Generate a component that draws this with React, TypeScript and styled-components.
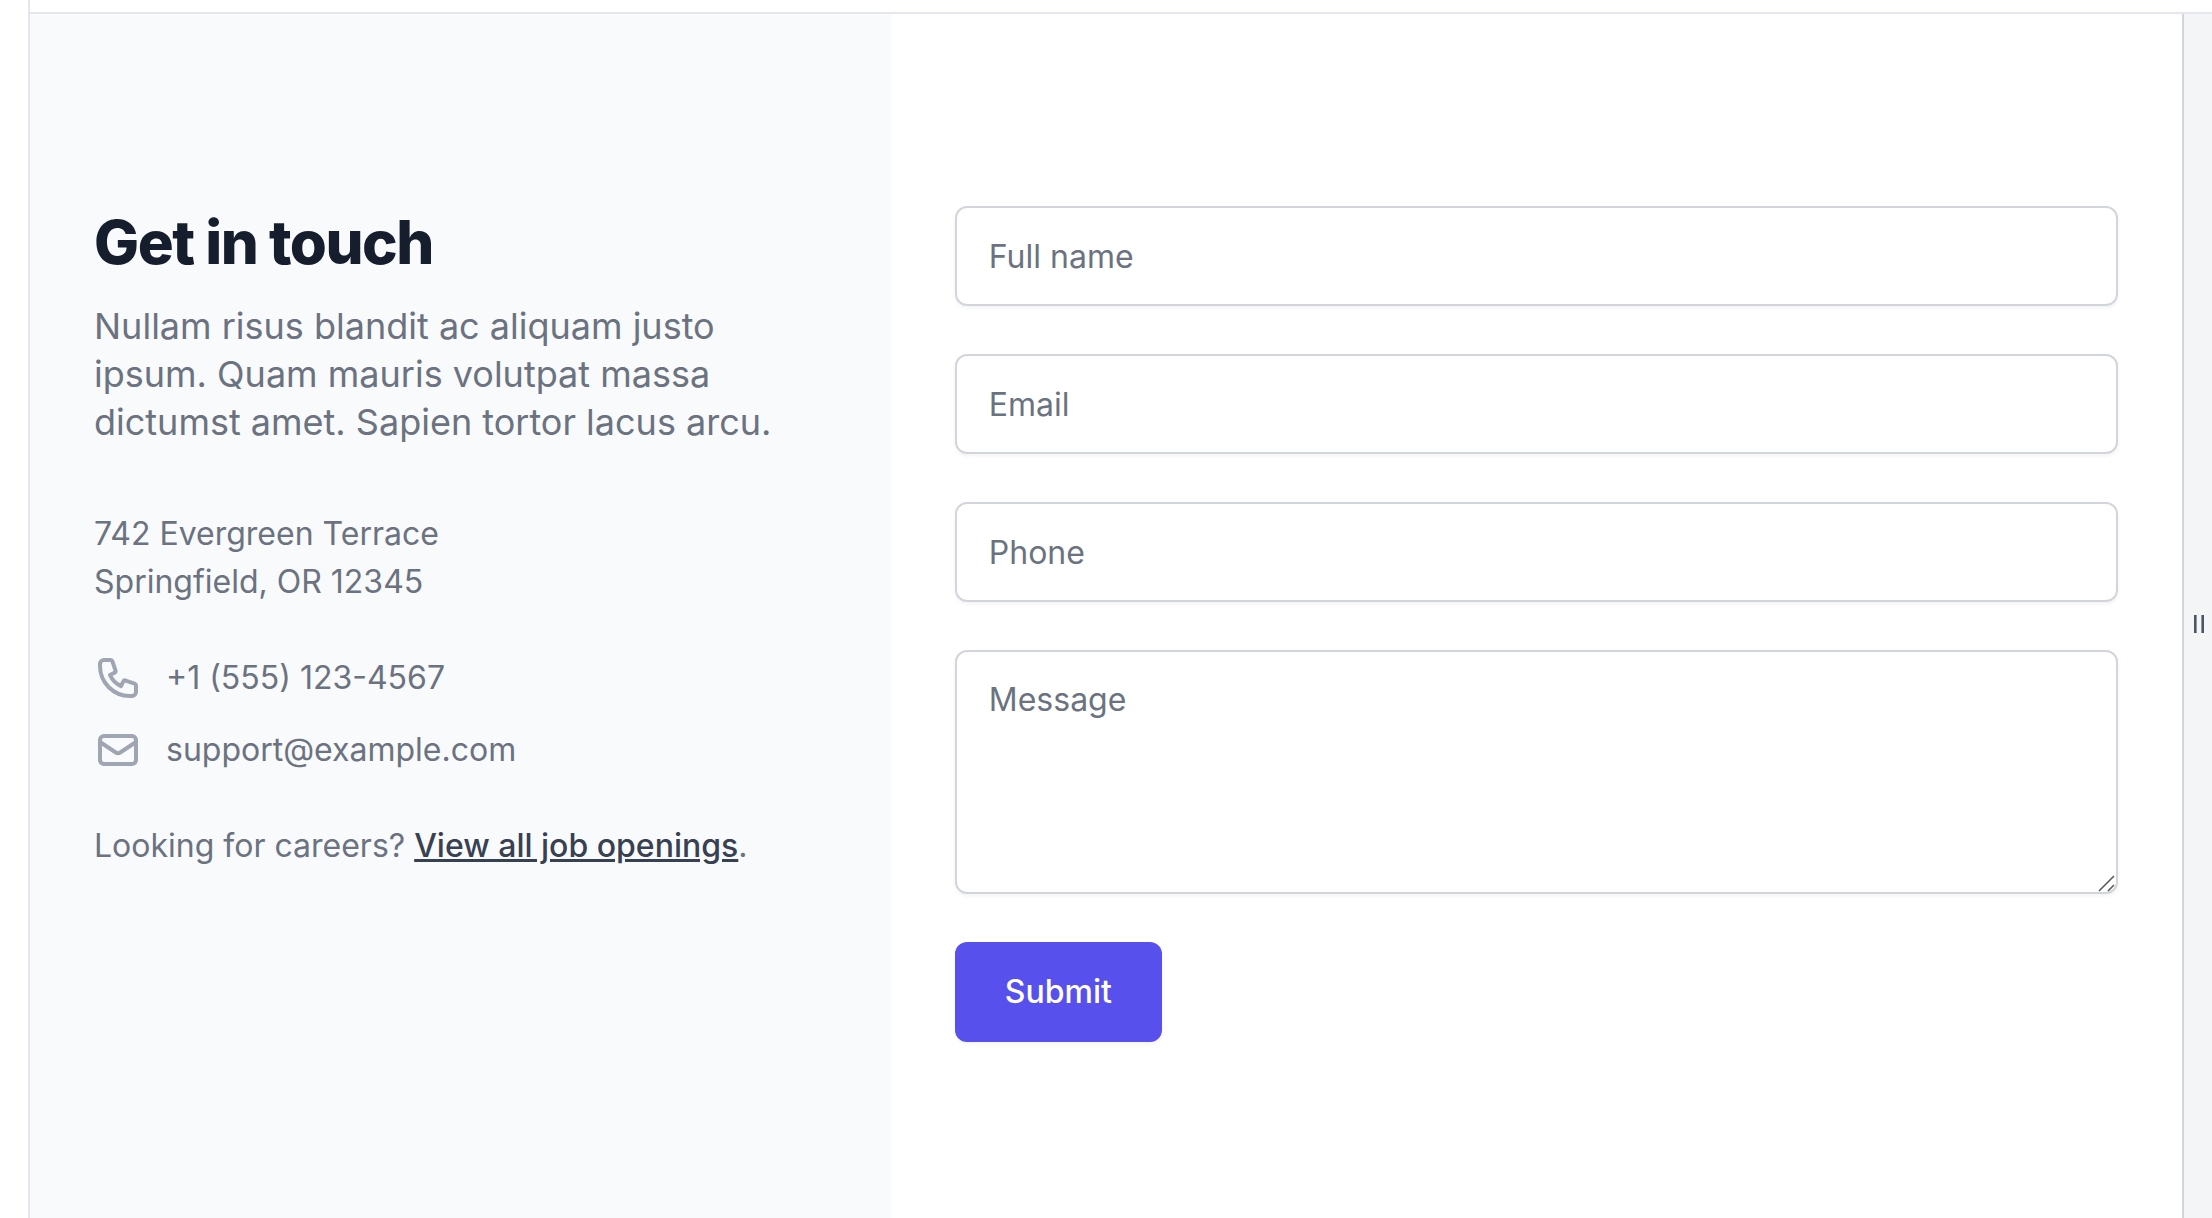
import React from "react";
import styled, { createGlobalStyle } from "styled-components";

const GlobalStyle = createGlobalStyle`
  *, *::before, *::after { box-sizing: border-box; }
  body {
    margin: 0;
    background: #ffffff;
    color: #6b7280;
    font-family: Inter, "Liberation Sans", sans-serif;
    font-size: 32px;
    line-height: 48px;
    -webkit-font-smoothing: antialiased;
  }
  h2, p, address { margin: 0; font-style: normal; }
`;

const Page = styled.div`
  height: 100vh;
  overflow: hidden;
  padding-left: 28px;
`;

const Preview = styled.div`
  border-left: 2px solid #e5e7eb;
`;

const TopBar = styled.header`
  height: 14px;
  border-bottom: 2px solid #e5e7eb;
`;

const Body = styled.div`
  display: flex;
`;

const Contact = styled.main`
  flex: 1;
  min-width: 0;
  display: grid;
  grid-template-columns: repeat(5, minmax(0, 1fr));
`;

const Info = styled.section`
  grid-column: span 2;
  padding: 192px 64px;
  background: #f9fafc;
`;

const FormPanel = styled.section`
  grid-column: span 3;
  padding: 192px 64px;
`;

const Title = styled.h2`
  color: #161e2e;
  font-size: 60px;
  font-weight: 800;
  line-height: 72px;
  letter-spacing: -0.025em;
`;

const Lead = styled.p`
  margin-top: 24px;
  font-size: 36px;
`;

const Address = styled.address`
  margin-top: 64px;
`;

const ContactList = styled.div`
  display: grid;
  gap: 24px;
  margin: 48px 0;
`;

const ContactLine = styled.div`
  display: flex;
  gap: 24px;
`;

const Icon = styled.svg`
  width: 48px;
  height: 48px;
  flex: none;
  fill: none;
  stroke: #9fa6b2;
  stroke-width: 2;
  stroke-linecap: round;
  stroke-linejoin: round;
`;

const JobsLink = styled.a`
  color: #374151;
  font-weight: 500;
  text-decoration: underline;
`;

const Form = styled.form`
  display: grid;
  gap: 48px;
`;

const Field = styled.div`
  position: relative;
  display: grid;
`;

const Input = styled.input`
  width: 100%;
  padding: 24px 32px;
  border: 2px solid #d2d6dc;
  border-radius: 12px;
  background: #ffffff;
  box-shadow: 0 2px 4px rgba(0, 0, 0, 0.05);
  color: #161e2e;
  font: inherit;
  line-height: 48px;
  height: 100px;

  &::placeholder { color: #6b7280; opacity: 1; }
`;

const TextArea = styled(Input)`
  display: block;
  height: auto;
  resize: vertical;

  &::-webkit-resizer { display: none; }
`;

const Grip = styled.svg`
  position: absolute;
  right: 2px;
  bottom: 2px;
  width: 18px;
  height: 18px;
  pointer-events: none;
  stroke: #5c5c5c;
  stroke-width: 1.6;
`;

const Submit = styled.button`
  justify-self: start;
  padding: 24px 48px;
  border: 2px solid transparent;
  border-radius: 12px;
  background: #5850ec;
  box-shadow: 0 2px 4px rgba(0, 0, 0, 0.05);
  color: #ffffff;
  font: inherit;
  font-weight: 500;
  cursor: pointer;
`;

const ResizeHandle = styled.div`
  flex: none;
  display: flex;
  align-items: center;
  justify-content: center;
  width: 30px;
  padding-left: 2px;
  border-left: 2px solid #d2d6dc;
  background: #f4f5f7;
  cursor: ew-resize;
`;

const HandleIcon = styled.svg`
  width: 10px;
  height: 18px;
  fill: #4b5563;
`;

const fields = [
  { id: "full_name", label: "Full name", type: "text" },
  { id: "email", label: "Email", type: "email" },
  { id: "phone", label: "Phone", type: "tel" },
];

export default function App() {
  return (
    <Page>
      <GlobalStyle />
      <Preview>
        <TopBar />
        <Body>
          <Contact>
            <Info>
              <Title>Get in touch</Title>
              <Lead>
                Nullam risus blandit ac aliquam justo ipsum. Quam mauris volutpat massa dictumst
                amet. Sapien tortor lacus arcu.
              </Lead>
              <Address>
                742 Evergreen Terrace
                <br />
                Springfield, OR 12345
              </Address>
              <ContactList>
                <ContactLine>
                  <Icon viewBox="0 0 24 24" aria-hidden="true">
                    <path d="M3 5a2 2 0 012-2h3.28a1 1 0 01.948.684l1.498 4.493a1 1 0 01-.502 1.21l-2.257 1.13a11.042 11.042 0 005.516 5.516l1.13-2.257a1 1 0 011.21-.502l4.493 1.498a1 1 0 01.684.949V19a2 2 0 01-2 2h-1C9.716 21 3 14.284 3 6V5z" />
                  </Icon>
                  <span>+1 (555) 123-4567</span>
                </ContactLine>
                <ContactLine>
                  <Icon viewBox="0 0 24 24" aria-hidden="true">
                    <path d="M3 8l7.89 5.26a2 2 0 002.22 0L21 8M5 19h14a2 2 0 002-2V7a2 2 0 00-2-2H5a2 2 0 00-2 2v10a2 2 0 002 2z" />
                  </Icon>
                  <span>support@example.com</span>
                </ContactLine>
              </ContactList>
              <p>
                Looking for careers? <JobsLink href="#jobs">View all job openings</JobsLink>.
              </p>
            </Info>
            <FormPanel>
              <Form onSubmit={(event) => event.preventDefault()}>
                {fields.map((field) => (
                  <Field key={field.id}>
                    <Input
                      id={field.id}
                      type={field.type}
                      aria-label={field.label}
                      placeholder={field.label}
                    />
                  </Field>
                ))}
                <Field>
                  <TextArea
                    as="textarea"
                    id="message"
                    rows={4}
                    aria-label="Message"
                    placeholder="Message"
                  />
                  <Grip viewBox="0 0 18 18" aria-hidden="true">
                    <path d="M1 17L16 2M10 17L16 11" />
                  </Grip>
                </Field>
                <Submit type="submit">Submit</Submit>
              </Form>
            </FormPanel>
          </Contact>
          <ResizeHandle>
            <HandleIcon viewBox="0 0 10 18" aria-hidden="true">
              <path d="M0 0h2.6v18H0zM7.4 0H10v18H7.4z" />
            </HandleIcon>
          </ResizeHandle>
        </Body>
      </Preview>
    </Page>
  );
}
